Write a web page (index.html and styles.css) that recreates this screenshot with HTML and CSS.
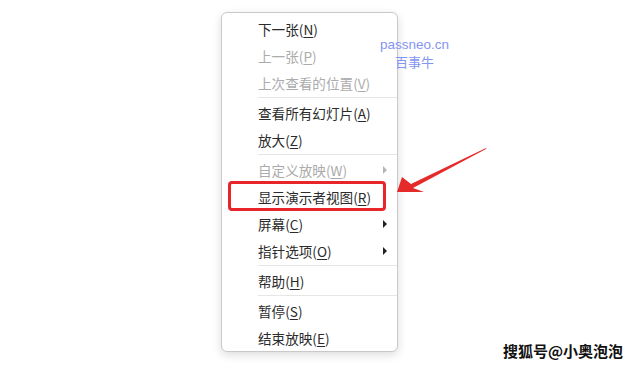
FILE: index.html
```html
<!DOCTYPE html>
<html lang="zh-CN">
<head>
    <meta charset="UTF-8">
    <meta name="viewport" content="width=device-width, initial-scale=1.0">
    <title>幻灯片放映菜单</title>
    <link rel="stylesheet" href="styles.css">
</head>
<body>

<!-- === Slide show context menu === -->
<div class="stage">
    <ul class="ctx-menu">
        <li class="item">下一张(<u>N</u>)</li>
        <li class="item disabled">上一张(<u>P</u>)</li>
        <li class="item disabled">上次查看的位置(<u>V</u>)</li>
        <li class="sep"></li>
        <li class="item">查看所有幻灯片(<u>A</u>)</li>
        <li class="item">放大(<u>Z</u>)</li>
        <li class="sep"></li>
        <li class="item disabled has-sub">自定义放映(<u>W</u>)<span class="sub-arrow"></span></li>
        <li class="item">显示演示者视图(<u>R</u>)</li>
        <li class="item has-sub">屏幕(<u>C</u>)<span class="sub-arrow"></span></li>
        <li class="item has-sub">指针选项(<u>O</u>)<span class="sub-arrow"></span></li>
        <li class="sep"></li>
        <li class="item">帮助(<u>H</u>)</li>
        <li class="sep"></li>
        <li class="item">暂停(<u>S</u>)</li>
        <li class="item">结束放映(<u>E</u>)</li>
    </ul>

    <!-- annotations drawn over the screenshot -->
    <div class="highlight"></div>
    <svg class="pointer" width="100" height="60" viewBox="0 0 100 60">
        <polygon points="7,52 12,37 21,44 96,8 96.4,8.8 23,48 34,52" fill="#e52a2a"/>
    </svg>
    <div class="mark">
        <span class="mark-url">passneo.cn</span>
        <span class="mark-name">百事牛</span>
    </div>
    <div class="credit">搜狐号@小奥泡泡</div>
</div>

</body>
</html>
```

FILE: styles.css
```css
/* === Page === */
body {
    margin: 0;
    background: #fff;
    font-family: "Noto Sans CJK SC", "Noto Sans", sans-serif;
    color: #222;
}

.stage {
    position: relative;
    width: 641px;
    height: 368px;
    padding: 12px 0 0 221px;
    box-sizing: border-box;
    overflow: hidden;
}

/* === Context menu === */
.ctx-menu {
    list-style: none;
    margin: 0;
    padding: 2px 0 0;
    width: 175px;
    background: #fff;
    border: 1px solid #c9c9c9;
    border-radius: 6px;
    box-shadow: 0 3px 10px rgba(0, 0, 0, 0.14);
}

.ctx-menu .item {
    display: flex;
    align-items: center;
    height: 27px;
    padding: 0 10px 0 36px;
    font-size: 13.6px;
    color: #2b2b2b;
    white-space: nowrap;
}

.ctx-menu .item u {
    text-underline-offset: 2px;
}

.ctx-menu .disabled {
    color: #ababab;
}

.ctx-menu .sep {
    height: 1px;
    margin: 1px 0 1px 36px;
    background: #e6e6e6;
}

.sub-arrow {
    margin-left: auto;
    width: 0;
    height: 0;
    border-top: 4px solid transparent;
    border-bottom: 4px solid transparent;
    border-left: 4px solid #222;
}

.disabled .sub-arrow {
    border-left-color: #b5b5b5;
}

/* === Annotations === */
.highlight {
    position: absolute;
    left: 228px;
    top: 181px;
    width: 152px;
    height: 24px;
    border: 3px solid #e8262a;
    border-radius: 4px;
}

.pointer {
    position: absolute;
    left: 390px;
    top: 140px;
}

.mark {
    position: absolute;
    left: 380px;
    top: 37px;
    display: flex;
    flex-direction: column;
    align-items: center;
    gap: 2px;
    font-size: 13px;
    line-height: 15px;
    color: #8494f2;
}

.mark-url {
    font-family: "Liberation Sans", Arial, sans-serif;
    font-size: 13.5px;
}

.credit {
    position: absolute;
    left: 503px;
    top: 340px;
    font-size: 15px;
    font-weight: bold;
    color: #111;
    text-shadow: 0 0 2px #fff, 0 0 2px #fff;
}
```
